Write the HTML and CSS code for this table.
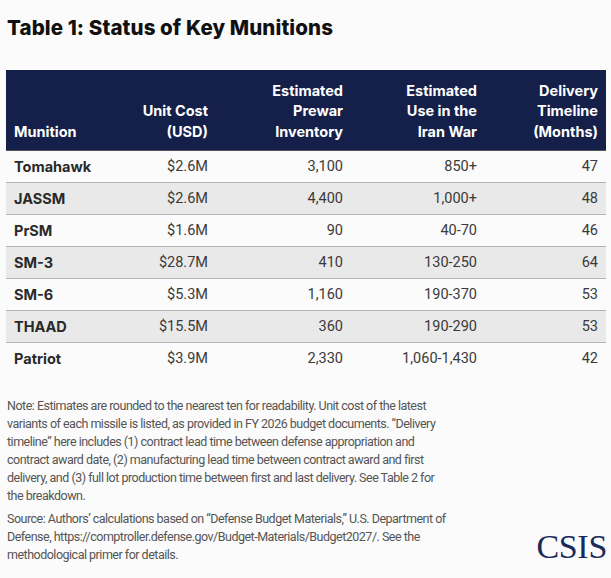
FILE: index.html
```html
<!DOCTYPE html>
<html lang="en">
<head>
<meta charset="utf-8">
<title>Table 1: Status of Key Munitions</title>
<link rel="stylesheet" href="styles.css">
</head>
<body>
<div class="page">
  <h1 class="title">Table 1: Status of Key Munitions</h1>
  <table class="tbl">
    <colgroup>
      <col class="c1"><col class="c2"><col class="c3"><col class="c4"><col class="c5">
    </colgroup>
    <thead>
      <tr>
        <th class="left">Munition</th>
        <th>Unit Cost<br>(USD)</th>
        <th>Estimated<br>Prewar<br>Inventory</th>
        <th>Estimated<br>Use in the<br>Iran War</th>
        <th>Delivery<br>Timeline<br>(Months)</th>
      </tr>
    </thead>
    <tbody>
      <tr><td class="name">Tomahawk</td><td>$2.6M</td><td>3,100</td><td>850+</td><td>47</td></tr>
      <tr class="alt"><td class="name">JASSM</td><td>$2.6M</td><td>4,400</td><td>1,000+</td><td>48</td></tr>
      <tr><td class="name">PrSM</td><td>$1.6M</td><td>90</td><td>40-70</td><td>46</td></tr>
      <tr class="alt"><td class="name">SM-3</td><td>$28.7M</td><td>410</td><td>130-250</td><td>64</td></tr>
      <tr><td class="name">SM-6</td><td>$5.3M</td><td>1,160</td><td>190-370</td><td>53</td></tr>
      <tr class="alt"><td class="name">THAAD</td><td>$15.5M</td><td>360</td><td>190-290</td><td>53</td></tr>
      <tr class="last"><td class="name">Patriot</td><td>$3.9M</td><td>2,330</td><td>1,060-1,430</td><td>42</td></tr>
    </tbody>
  </table>
  <div class="foot">
    <p class="note">Note: Estimates are rounded to the nearest ten for readability. Unit cost of the latest<br>variants of each missile is listed, as provided in FY 2026 budget documents. “Delivery<br>timeline” here includes (1) contract lead time between defense appropriation and<br>contract award date, (2) manufacturing lead time between contract award and first<br>delivery, and (3) full lot production time between first and last delivery. See Table 2 for<br>the breakdown.</p>
    <div class="src-row">
      <p class="note src">Source: Authors’ calculations based on “Defense Budget Materials,” U.S. Department of<br>Defense, https://comptroller.defense.gov/Budget-Materials/Budget2027/. See the<br>methodological primer for details.</p>
      <div class="logo">CSIS</div>
    </div>
  </div>
</div>
</body>
</html>
```
FILE: styles.css
```css
html, body {
  margin: 0;
  padding: 0;
  background: #fbfbfb;
}
.page {
  width: 611px;
  height: 578px;
  padding: 0 5px 0 6px;
  box-sizing: border-box;
  font-family: Roboto, "Liberation Sans", sans-serif;
  color: #333;
}
.title {
  margin: 0;
  padding: 17px 0 0 1px;
  height: 70px;
  box-sizing: border-box;
  font-family: Inter, "Liberation Sans", sans-serif;
  font-weight: 800;
  font-size: 20.5px;
  line-height: 22px;
  color: #111;
  letter-spacing: 0.1px;
}
.tbl {
  width: 600px;
  border-collapse: collapse;
  table-layout: fixed;
}
.c1 { width: 106px; }
.c2 { width: 104px; }
.c3 { width: 135px; }
.c4 { width: 134px; }
.c5 { width: 121px; }
.tbl thead th {
  background: #15204a;
  color: #fff;
  font-family: Inter, "Liberation Sans", sans-serif;
  font-weight: 700;
  font-size: 14.5px;
  line-height: 20.5px;
  text-align: right;
  vertical-align: bottom;
  padding: 10px 8px 8px 8px;
  height: 62px;
  border-bottom: 1px solid #555;
}
.tbl thead th.left { text-align: left; }
.tbl td {
  height: 31px;
  padding: 0 8px;
  font-size: 14.5px;
  text-align: right;
  color: #3a3a3a;
  border-bottom: 1px solid #b4b4b4;
  vertical-align: middle;
}
.tbl td.name {
  text-align: left;
  font-family: Inter, "Liberation Sans", sans-serif;
  font-weight: 700;
  font-size: 14.5px;
  color: #2a2a2a;
}
.tbl tr.alt td { background: #e9e9e9; }
.tbl tr.last td { border-bottom: none; }
.foot {
  padding: 23px 0 0 1px;
}
.note {
  margin: 0;
  font-family: Roboto, "Liberation Sans", sans-serif;
  font-size: 12.5px;
  line-height: 18px;
  letter-spacing: -0.5px;
  color: #555;
  white-space: nowrap;
}
.foot > .note { margin-bottom: 5px; }
.src-row {
  display: flex;
  justify-content: space-between;
  align-items: flex-end;
}
.logo {
  font-family: "Liberation Serif", serif;
  font-size: 34px;
  line-height: 30px;
  color: #1a2a5a;
  padding-bottom: 2px;
  letter-spacing: -0.3px;
  margin-right: -1px;
}
```
